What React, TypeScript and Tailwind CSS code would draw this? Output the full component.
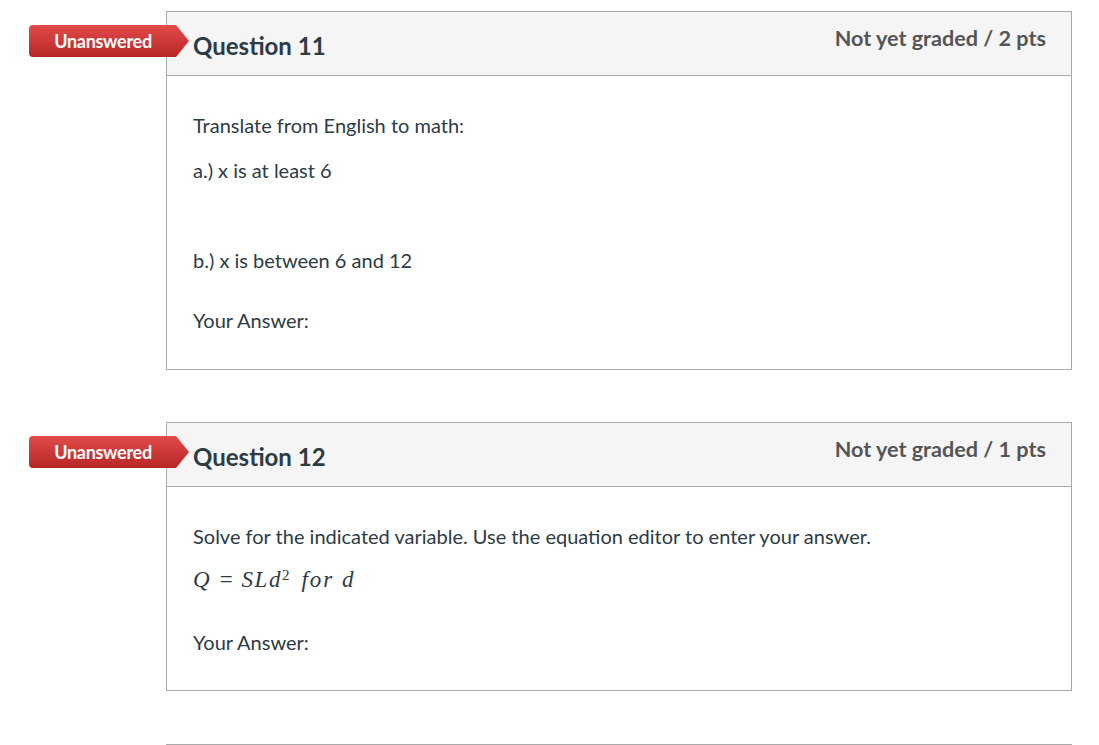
import React from "react";

const font = { fontFamily: "Lato, 'Open Sans', sans-serif" };

function Badge() {
  return (
    <div className="absolute left-[-138px] top-[13px] h-[32px] w-[160px] rounded-l-[4px] bg-linear-to-b from-[#e34a4a] to-[#b72626] [clip-path:polygon(0_0,147px_0,160px_50%,147px_100%,0_100%)]">
      <div className="flex h-full w-[148px] items-center justify-center text-[18px] font-bold tracking-[-0.3px] text-white">
        Unanswered
      </div>
    </div>
  );
}

interface QuestionProps {
  title: string;
  points: string;
  children: React.ReactNode;
  bodyHeight: string;
}

function Question({ title, points, children, bodyHeight }: QuestionProps) {
  return (
    <div className="relative ml-[166px] w-[906px] border border-[#aaaaaa]">
      <Badge />
      <div className="flex h-[64px] items-start justify-between border-b border-[#aaaaaa] bg-[#f5f5f5] pl-[26px] pr-[25px]">
        <div className="pt-[20px] text-[24px] font-bold leading-[28px] text-[#2d3b45]">{title}</div>
        <div className="pt-[12px] text-[21.6px] font-bold leading-[28px] text-[#555555]">{points}</div>
      </div>
      <div className={`${bodyHeight} px-[26px] text-[20px] leading-[28px] text-[#2d3b45]`}>{children}</div>
    </div>
  );
}

export default function App() {
  return (
    <div className="h-[745px] w-full overflow-hidden bg-white pt-[11px]" style={font}>
      <Question title="Question 11" points="Not yet graded / 2 pts" bodyHeight="h-[293px]">
        <p className="pt-[35px]">Translate from English to math:</p>
        <p className="mt-[17px]">a.) x is at least 6</p>
        <p className="mt-[62px]">b.) x is between 6 and 12</p>
        <p className="mt-[32px]">Your Answer:</p>
      </Question>

      <div className="h-[52px]" />

      <Question title="Question 12" points="Not yet graded / 1 pts" bodyHeight="h-[203px]">
        <p className="pt-[35px]">Solve for the indicated variable. Use the equation editor to enter your answer.</p>
        <p
          className="mt-[16px] text-[23px] text-[#2d3b45]"
          style={{ fontFamily: "'Liberation Serif', 'DejaVu Serif', serif" }}
        >
          <i className="tracking-[1px]">Q</i>
          <span className="mx-[9px]">=</span>
          <i className="tracking-[1.5px]">SLd</i>
          <sup className="text-[15px]">2</sup>
          <i className="ml-[12px] tracking-[2px]">for d</i>
        </p>
        <p className="mt-[34px]">Your Answer:</p>
      </Question>

      <div className="ml-[166px] mt-[53px] w-[906px] border-t-2 border-[#aaaaaa]" />
    </div>
  );
}
